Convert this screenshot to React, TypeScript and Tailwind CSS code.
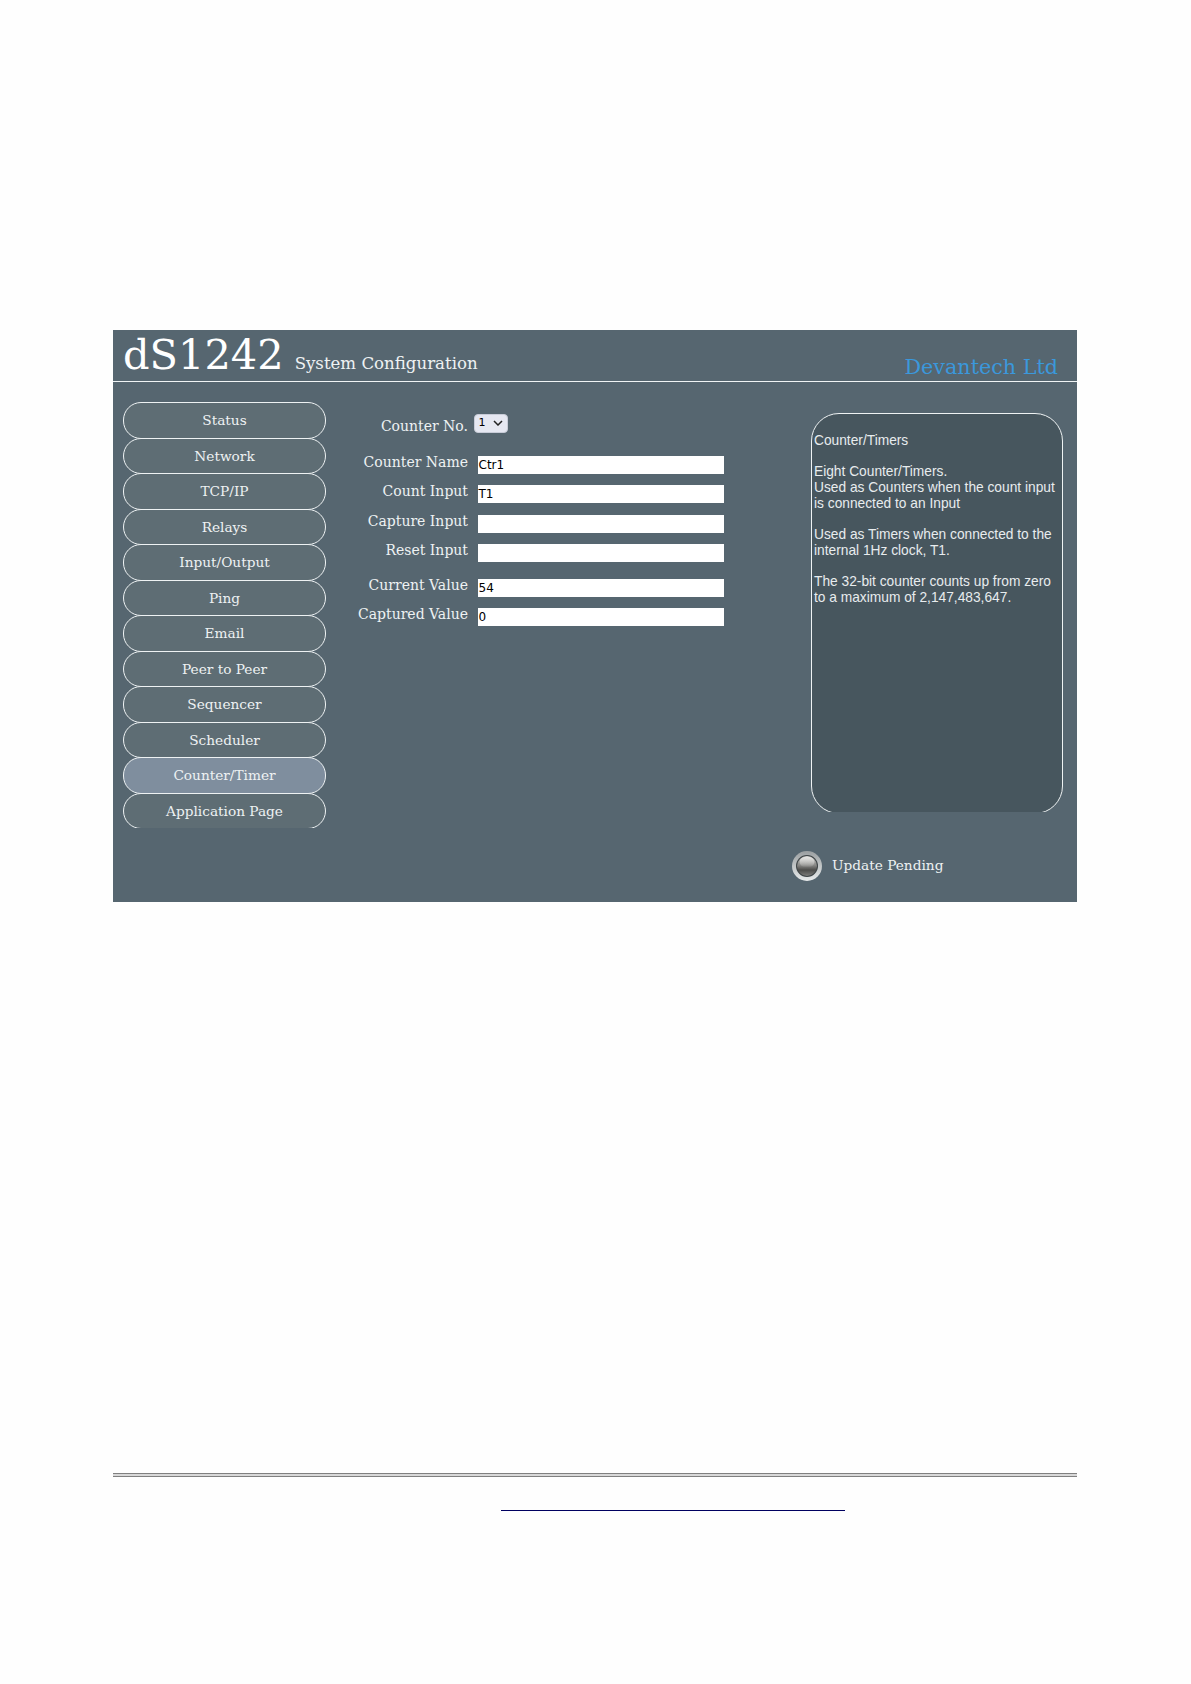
export default function App() {
  const nav = ["Status", "Network", "TCP/IP", "Relays", "Input/Output", "Ping", "Email", "Peer to Peer", "Sequencer", "Scheduler", "Counter/Timer", "Application Page"];
  const fields = [
    { label: "Counter Name", value: "Ctr1", mt: "mt-0" },
    { label: "Count Input", value: "T1", mt: "mt-[11px]" },
    { label: "Capture Input", value: "", mt: "mt-[12px]" },
    { label: "Reset Input", value: "", mt: "mt-[11px]" },
    { label: "Current Value", value: "54", mt: "mt-[17px]" },
    { label: "Captured Value", value: "0", mt: "mt-[11px]" },
  ];
  return (
    <div className="min-h-[1684px] bg-[#fefefe] pt-[330px] font-['DejaVu_Serif',serif]">
      <div className="mx-[113px] h-[572px] w-[964px] bg-[#566670]">
        <div className="relative flex h-[52px] items-end border-b border-[#f0f4f5] pl-[10px]">
          <span className="mb-[1px] text-[41.5px] leading-[50px] text-white">dS1242</span>
          <span className="mb-[6px] ml-[11px] text-[16.6px] leading-[22px] text-[#eef2f3]">System Configuration</span>
          <span className="mb-[1px] ml-auto mr-[19px] text-[20.7px] leading-[26px] text-[#3b98dc]">Devantech Ltd</span>
        </div>
        <div className="flex">
          <div className="ml-[10px] mt-[20px] h-[426px] w-[203px] shrink-0 overflow-hidden">
            {nav.map((n) => (
              <div
                key={n}
                className={`-mb-[1px] flex h-[36.5px] w-full items-center justify-center rounded-[18px] border border-[#eef2f3] pt-[2px] text-[13.7px] leading-none text-[#eef2f3] ${n === "Counter/Timer" ? "bg-[#7f8e9e]" : "bg-[#5e6d74]"}`}
              >
                {n}
              </div>
            ))}
          </div>
          <div className="ml-[8px] w-[390px] shrink-0 pt-[31px]">
            <div className="flex h-[20px] items-center">
              <span className="mt-[6px] w-[134px] shrink-0 text-right text-[14px] leading-none text-[#eef2f3]">Counter No.</span>
              <div className="ml-[5.5px] flex h-[19px] w-[34px] shrink-0 items-center justify-between rounded-[4px] border border-[#c8ccd8] bg-[#e6e8f2] px-[4px] font-['DejaVu_Sans',sans-serif] text-[11px] text-black">
                <span>1</span>
                <svg width="10" height="6" viewBox="0 0 10 6" fill="none" stroke="#222" strokeWidth="1.5"><path d="M1 1l4 4 4-4" /></svg>
              </div>
            </div>
            <div className="mt-[23px]">
              {fields.map((f) => (
                <div key={f.label} className={`flex h-[18px] items-center ${f.mt}`}>
                  <span className="-mt-[6px] w-[134px] shrink-0 whitespace-nowrap text-right text-[14px] leading-none text-[#eef2f3]">{f.label}</span>
                  <div className="ml-[9.5px] flex h-[18px] w-[246.5px] shrink-0 items-center bg-white pl-[1px] font-['DejaVu_Sans',sans-serif] text-[12px] text-black">{f.value}</div>
                </div>
              ))}
            </div>
          </div>
          <div className="ml-[87px] mt-[31px] h-[399px] w-[252px] shrink-0 overflow-hidden">
            <div className="h-[401px] rounded-[28px] border border-[#eef2f3] bg-[#47565e] pl-[2px] pt-[19px] font-['Liberation_Sans',sans-serif] text-[13.75px] leading-[15.7px] text-[#e8ecee]">
              Counter/Timers
              <br /><br />
              Eight Counter/Timers.
              <br />
              Used as Counters when the count input
              <br />
              is connected to an Input
              <br /><br />
              Used as Timers when connected to the
              <br />
              internal 1Hz clock, T1.
              <br /><br />
              The 32-bit counter counts up from zero
              <br />
              to a maximum of 2,147,483,647.
            </div>
          </div>
        </div>
        <div className="ml-[679px] mt-[23px] flex items-center">
          <svg width="30" height="30" viewBox="0 0 30 30">
            <defs>
              <linearGradient id="ring" x1="0" y1="0" x2="0" y2="1">
                <stop offset="0" stopColor="#9a9fa1" />
                <stop offset="1" stopColor="#e8ebec" />
              </linearGradient>
              <linearGradient id="core" x1="0" y1="0" x2="0" y2="1">
                <stop offset="0" stopColor="#c4c4c2" />
                <stop offset="0.45" stopColor="#8a8a88" />
                <stop offset="0.7" stopColor="#4c4c4a" />
                <stop offset="1" stopColor="#7c7c7a" />
              </linearGradient>
              <linearGradient id="shine" x1="0" y1="0" x2="0" y2="1">
                <stop offset="0" stopColor="#e6e6e4" />
                <stop offset="1" stopColor="#e6e6e4" stopOpacity="0" />
              </linearGradient>
            </defs>
            <circle cx="15" cy="15" r="15" fill="url(#ring)" />
            <circle cx="15" cy="15" r="11" fill="#3e4446" />
            <circle cx="15" cy="15" r="10" fill="url(#core)" />
            <ellipse cx="15" cy="11" rx="7.5" ry="5.5" fill="url(#shine)" />
          </svg>
          <span className="-mt-[2px] ml-[10px] text-[13.7px] text-[#eef2f3]">Update Pending</span>
        </div>
      </div>
      <div className="mx-[113px] mt-[571px] h-[4px] w-[964px] border-y border-[#808080] bg-[#d8d8d8]" />
      <div className="ml-[501px] mt-[33px] h-[1px] w-[344px] bg-[#000060]" />
    </div>
  );
}
